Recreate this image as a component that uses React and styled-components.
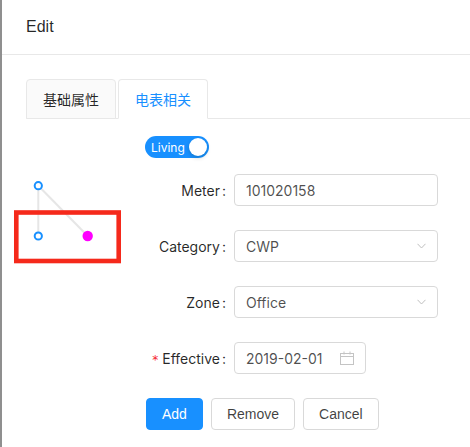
import React from "react";
import styled, { createGlobalStyle } from "styled-components";

const Global = createGlobalStyle`
  html, body { margin: 0; padding: 0; background: #fff; }
  body {
    font-family: Inter, "Liberation Sans", "Noto Sans CJK SC", sans-serif;
    font-size: 14px;
    color: rgba(0,0,0,0.65);
  }
  * { box-sizing: border-box; }
`;

const Page = styled.div`
  display: flex;
  width: 470px;
  height: 447px;
  overflow: hidden;
`;

const Edge = styled.div`
  flex: 0 0 2px;
  background: #8f8f8f;
`;

const Modal = styled.div`
  flex: 1;
  display: flex;
  flex-direction: column;
  background: #fff;
  min-width: 0;
`;

const Header = styled.div`
  height: 55px;
  padding: 16px 24px;
  border-bottom: 1px solid #e8e8e8;
  font-family: "Liberation Sans", Arial, sans-serif;
  font-size: 16px;
  line-height: 22px;
  color: rgba(0,0,0,0.85);
`;

const Body = styled.div`
  padding-top: 24px;
`;

const TabBar = styled.div`
  display: flex;
  gap: 2px;
  margin-left: 24px;
  border-bottom: 1px solid #e8e8e8;
  margin-bottom: 17px;
`;

const Tab = styled.div`
  height: 40px;
  padding: 0 16px;
  margin-bottom: -1px;
  display: flex;
  align-items: center;
  border: 1px solid #e8e8e8;
  border-radius: 4px 4px 0 0;
  background: ${p => (p.$active ? "#fff" : "#fafafa")};
  border-bottom-color: ${p => (p.$active ? "#fff" : "#e8e8e8")};
  color: ${p => (p.$active ? "#1890ff" : "rgba(0,0,0,0.85)")};
  font-size: 14px;
`;

const Content = styled.div`
  display: flex;
`;

const Diagram = styled.svg`
  flex: 0 0 143px;
  height: 140px;
  display: block;
`;

const Form = styled.div`
  display: flex;
  flex-direction: column;
  gap: 24px;
`;

const SwitchRow = styled.div`
  display: flex;
  margin-bottom: -8px;
`;

const Switch = styled.div`
  height: 22px;
  width: 64px;
  border-radius: 11px;
  background: #1890ff;
  display: flex;
  align-items: center;
  justify-content: space-between;
  padding: 0 2px 0 6px;
  color: #fff;
  font-size: 12px;
`;

const Knob = styled.span`
  width: 18px;
  height: 18px;
  border-radius: 50%;
  background: #fff;
  box-shadow: 0 2px 4px rgba(0,35,11,0.2);
`;

const Row = styled.div`
  display: flex;
  align-items: center;
  height: 32px;
`;

const Label = styled.label`
  width: 89px;
  text-align: right;
  color: rgba(0,0,0,0.85);
  white-space: nowrap;
  &::after {
    content: ":";
    margin: 0 8px 0 2px;
  }
`;

const Required = styled.span`
  color: #f5222d;
  margin-right: 4px;
  font-family: "DejaVu Sans", sans-serif;
  font-size: 12px;
`;

const Field = styled.div`
  width: ${p => p.$w}px;
  height: 32px;
  border: 1px solid #d9d9d9;
  border-radius: 4px;
  padding: 0 11px;
  display: flex;
  align-items: center;
  justify-content: space-between;
  color: rgba(0,0,0,0.7);
  background: #fff;
`;

const Buttons = styled.div`
  display: flex;
  gap: 8px;
  padding-left: 1px;
`;

const Button = styled.button`
  height: 32px;
  padding: 0 15px;
  border-radius: 4px;
  font-family: "Liberation Sans", Arial, sans-serif;
  font-size: 14px;
  border: 1px solid ${p => (p.$primary ? "#1890ff" : "#d9d9d9")};
  background: ${p => (p.$primary ? "#1890ff" : "#fff")};
  color: ${p => (p.$primary ? "#fff" : "rgba(0,0,0,0.75)")};
`;

const Arrow = () => (
  <svg width="9" height="6" viewBox="0 0 9 6" fill="none">
    <path d="M0.5 0.8 L4.5 5 L8.5 0.8" stroke="#bfbfbf" strokeWidth="1" />
  </svg>
);

const Calendar = () => (
  <svg width="14" height="14" viewBox="0 0 14 14" fill="none" stroke="#c4c4c4" strokeWidth="1">
    <rect x="0.5" y="2.5" width="13" height="11" />
    <line x1="0.5" y1="5.5" x2="13.5" y2="5.5" />
    <line x1="4" y1="0.5" x2="4" y2="3.5" />
    <line x1="10" y1="0.5" x2="10" y2="3.5" />
  </svg>
);

export default function App() {
  return (
    <>
      <Global />
      <Page>
        <Edge />
        <Modal>
          <Header>Edit</Header>
          <Body>
            <TabBar>
              <Tab>基础属性</Tab>
              <Tab $active>电表相关</Tab>
            </TabBar>
            <Content>
              <Diagram viewBox="0 0 143 140">
                <line x1="36.3" y1="49.7" x2="36.3" y2="100" stroke="#e6e6e6" strokeWidth="2" />
                <line x1="36.3" y1="49.7" x2="85.7" y2="100" stroke="#e6e6e6" strokeWidth="2" />
                <rect x="14.3" y="76.5" width="102.4" height="48.5" fill="none" stroke="#f5291b" strokeWidth="4.6" />
                <circle cx="36.3" cy="49.7" r="3.6" fill="#fff" stroke="#1890ff" strokeWidth="2" />
                <circle cx="36.3" cy="100" r="3.6" fill="#fff" stroke="#1890ff" strokeWidth="2" />
                <circle cx="85.7" cy="100" r="5.2" fill="#ff00ff" />
              </Diagram>
              <Form>
                <SwitchRow>
                  <Switch>
                    Living
                    <Knob />
                  </Switch>
                </SwitchRow>
                <Row>
                  <Label>Meter</Label>
                  <Field $w={204}>101020158</Field>
                </Row>
                <Row>
                  <Label>Category</Label>
                  <Field $w={204}>
                    CWP
                    <Arrow />
                  </Field>
                </Row>
                <Row>
                  <Label>Zone</Label>
                  <Field $w={204}>
                    Office
                    <Arrow />
                  </Field>
                </Row>
                <Row>
                  <Label>
                    <Required>*</Required>Effective
                  </Label>
                  <Field $w={132}>
                    2019-02-01
                    <Calendar />
                  </Field>
                </Row>
                <Buttons>
                  <Button $primary>Add</Button>
                  <Button>Remove</Button>
                  <Button>Cancel</Button>
                </Buttons>
              </Form>
            </Content>
          </Body>
        </Modal>
      </Page>
    </>
  );
}
